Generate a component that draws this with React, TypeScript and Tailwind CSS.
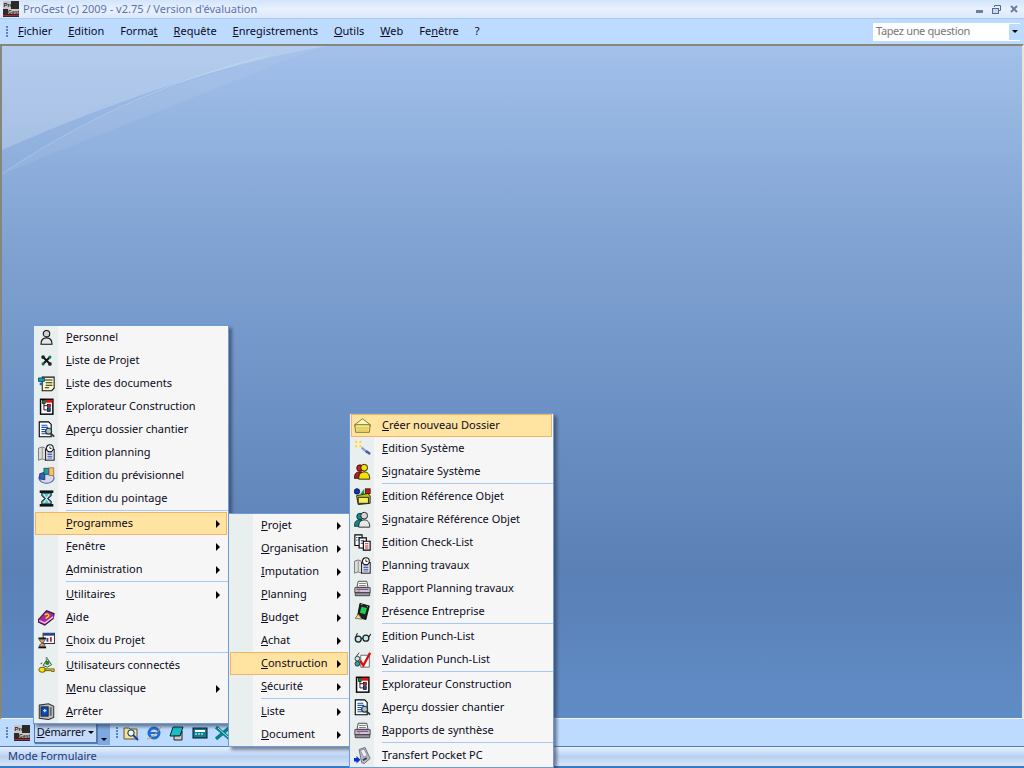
import React from "react";

type IconName = "person" | "tools" | "docs" | "explorer" | "preview" | "planning" | "budget" | "hourglass" | "book" | "choice" | "key" | "stop" | "folder" | "wand" | "users" | "shapes" | "tealuser" | "checklist" | "printer" | "chip" | "glasses" | "check" | "pocket";

function Icon({ name }: { name: IconName }) {
  const s = { width: 17, height: 17, viewBox: "0 0 20 20" };
  switch (name) {
    case "person":
      return <svg {...s}><circle cx="10" cy="5.500" r="3.800" fill="#d2d2d2" stroke="#111" strokeWidth="1.300" /><path d="M3.500 18c0-5.500 2.500-7.500 6.500-7.500s6.500 2 6.500 7.500z" fill="#e6e6e6" stroke="#111" strokeWidth="1.300" /></svg>;
    case "tools":
      return <svg {...s}><path d="M6.500 6.500l7 7M13.500 6.500l-7 7" stroke="#111" strokeWidth="2.300" /><circle cx="6" cy="6" r="2.200" fill="#222" /><circle cx="14" cy="14" r="2.200" fill="#222" /><circle cx="14" cy="6" r="1.800" fill="#0b7a52" /><circle cx="6" cy="14" r="1.800" fill="#0b7a52" /></svg>;
    case "docs":
      return <svg {...s}><path d="M5 2.500h14v13l-3 3H5z" fill="#fff7c2" stroke="#111" strokeWidth="1.200" /><path d="M8 6h9M9 9h8M9 12h8M8 15h5" stroke="#222" strokeWidth="1.200" /><path d="M0.500 3.500h7v4h-7z" fill="#18a0a8" stroke="#0b3d60" /><path d="M2 9h4v3H2z" fill="#1667b5" /></svg>;
    case "explorer":
      return <svg {...s}><rect x="3" y="1.500" width="14.500" height="17.500" fill="#fff" stroke="#000" strokeWidth="1.700" /><rect x="9" y="2" width="8" height="3.500" fill="#e01010" /><path d="M7 5v9h4M7 9h4" stroke="#000" fill="none" /><rect x="5" y="3" width="3.500" height="3.500" fill="#0a8a3a" stroke="#000" strokeWidth=".7" /><rect x="11" y="7.500" width="3.500" height="3.500" fill="#d02020" stroke="#000" strokeWidth=".7" /><rect x="11" y="12.500" width="3.500" height="3.500" fill="#2040d0" stroke="#000" strokeWidth=".7" /></svg>;
    case "preview":
      return <svg {...s}><path d="M1.500 1h11l3 3v14.500h-14z" fill="#fff" stroke="#000" strokeWidth="1.300" /><path d="M4 5h7M4 7.500h8M4 10h5M4 12.500h5M4 15h6" stroke="#1a4fc0" strokeWidth="1.200" /><circle cx="12.500" cy="12" r="3.500" fill="#9fc4cf" stroke="#333" strokeWidth="1.400" /><path d="M15 14.500l4 4" stroke="#333" strokeWidth="2" /></svg>;
    case "planning":
      return <svg {...s}><path d="M0.500 5l4.500-1.500L9 5v14l-4-1.500L.5 19z" fill="#ddd" stroke="#666" /><path d="M5 4v13" stroke="#888" /><rect x="9" y="6.500" width="10" height="12.500" fill="#fff" stroke="#111" strokeWidth="1.200" /><circle cx="14" cy="5" r="4" fill="#fff" stroke="#111" strokeWidth="1.200" /><path d="M14 3v2.200h2" stroke="#111" fill="none" /><path d="M11 10.500h6M11 12.500h6M11 14.500h6M11 16.500h6" stroke="#2c48a0" strokeWidth="1.100" /></svg>;
    case "budget":
      return <svg {...s}><path d="M1 13c0-3 4-5 9-5s9 2 9 5-4 6-9 6-9-3-9-6z" fill="#d5d8ea" stroke="#4a5a9a" strokeWidth="1.200" /><path d="M2 8l6-2v9l-6-1z" fill="#2f62c2" stroke="#1c2f70" /><rect x="7" y="1.500" width="5.500" height="7" fill="#22a09a" stroke="#155" /><rect x="13" y="1" width="5.500" height="9" fill="#f0c860" stroke="#a66" /></svg>;
    case "hourglass":
      return <svg {...s}><rect x="2" y="0.500" width="16" height="3" fill="#111" /><rect x="2" y="16.500" width="16" height="3" fill="#111" /><path d="M4.500 3.500h11v3L11.500 10l4 3.500v3h-11v-3L8.500 10l-4-3.500z" fill="#5fc6c0" stroke="#123" strokeWidth="1.200" /><path d="M6.500 4.500l7 11M13.500 4.500l-7 11" stroke="#fff" /></svg>;
    case "book":
      return <svg {...s}><path d="M0.500 12.500L10 2l9 3.500-1 5.500-10 8-7.500-3.500z" fill="#a8279a" stroke="#3a1040" strokeWidth="1.200" /><path d="M1.500 13.500l6.500 3 10-7.500" stroke="#f3d2ee" strokeWidth="1.500" fill="none" /><path d="M8 7c2-2 5.500-1 4.500 1.200S9.500 9 9.500 11.500" stroke="#f7e000" strokeWidth="1.700" fill="none" /></svg>;
    case "choice":
      return <svg {...s}><rect x="6" y="1.500" width="13.500" height="12" fill="#fff" stroke="#223" strokeWidth="1.100" /><rect x="6" y="1.500" width="13.500" height="2.800" fill="#2a3f9a" /><rect x="14" y="6" width="2.200" height="5.500" fill="#c92020" /><rect x="10" y="7" width="2.200" height="4.500" fill="#1f4fc0" /><rect x="0.500" y="6.500" width="9" height="2.200" fill="#111" /><rect x="0.500" y="17" width="9" height="2.200" fill="#111" /><path d="M2 8.500h6v2L5 13l3 2v2H2v-2l3-2-3-2.500z" fill="#c9a070" stroke="#433" strokeWidth=".8" /></svg>;
    case "key":
      return <svg {...s}><ellipse cx="5" cy="15" rx="4" ry="3" fill="#f2e21b" stroke="#554a00" /><path d="M8 14h11v3h-3v-1H8z" fill="#f2e21b" stroke="#554a00" /><path d="M6 10l5-8 5 7-5 3z" fill="#e7ecd8" stroke="#333" /><circle cx="11" cy="7" r="2.500" fill="#0c8f30" /><path d="M9 1h2M5 7l-2 1" stroke="#222" /></svg>;
    case "stop":
      return <svg {...s}><path d="M1.500 2.500l11-1.500 6 3v13l-6 2.500-11-1.500z" fill="#b9bec0" stroke="#333" strokeWidth="1.200" /><rect x="3.500" y="4.500" width="8.500" height="11" fill="#1444b8" stroke="#222" /><path d="M8 7v4M6 9h4" stroke="#9fe" strokeWidth="1.500" /><path d="M15 5v10" stroke="#666" strokeWidth="2.200" /></svg>;
    case "folder":
      return <svg {...s}><path d="M1 9l9-7 9 7v2H1z" fill="#fbf3c0" stroke="#6b6a20" /><path d="M1 9h18l-1 9H2z" fill="#f7e380" stroke="#6b6a20" /><path d="M3 13h14M4 15.500h12" stroke="#d0b840" /></svg>;
    case "wand":
      return <svg {...s}><path d="M1 1h8v8H1z" fill="#f8e488" /><path d="M5 0v10M0 5h10" stroke="#fff" /><path d="M2 2h1M7 7h1M2 7h1M7 2h1" stroke="#d8b020" /><path d="M9 9l7 6" stroke="#8a98d8" strokeWidth="2.500" /><path d="M14 13l5 3.500" stroke="#4a58b0" strokeWidth="2.800" /></svg>;
    case "users":
      return <svg {...s}><circle cx="7" cy="6" r="3.800" fill="#c62020" stroke="#300" /><path d="M0.500 18c0-6 2.500-7.500 6.500-7.500S11 12 11 18z" fill="#b02020" stroke="#300" /><circle cx="12" cy="5.500" r="4" fill="#f5e000" stroke="#111" /><path d="M5.500 19c0-6 2.500-8.500 6.500-8.500s6.500 2.500 6.500 8.500z" fill="#f5e000" stroke="#111" /></svg>;
    case "shapes":
      return <svg {...s}><circle cx="3.500" cy="4" r="3.200" fill="#1430c0" stroke="#013" /><rect x="13.500" y="1" width="5.500" height="5.500" fill="#c81818" stroke="#311" /><path d="M7.500 7l4.500-6v6z" fill="#149a30" /><path d="M3 9l13-2.500 3 2.500v9l-14 1.500z" fill="#c2c200" stroke="#111" /><path d="M5 11h12v7H5z" fill="#f8ec60" stroke="#111" /></svg>;
    case "tealuser":
      return <svg {...s}><circle cx="7" cy="6.500" r="3.800" fill="#138a86" stroke="#033" /><path d="M0.500 18c0-6 2.500-7.500 6.500-7.500S11 12 11 18z" fill="#138a86" stroke="#033" /><circle cx="12" cy="5.500" r="4" fill="#d5d5d5" stroke="#111" /><path d="M5.500 19c0-6 2.500-8.500 6.500-8.500s6.500 2.500 6.500 8.500z" fill="#e8e8e8" stroke="#111" /></svg>;
    case "checklist":
      return <svg {...s}><path d="M1 1h8.500v12.500H1z" fill="#fff" stroke="#000" strokeWidth="1.300" /><path d="M2.500 4h1.500M5 4h3M2.500 7h1.500M5 7h3" stroke="#1a3fb0" strokeWidth="1.200" /><path d="M6 4.500h8.500v12H6z" fill="#fff" stroke="#000" strokeWidth="1.300" /><path d="M8 8h4M8 11h4" stroke="#1a3fb0" strokeWidth="1.200" /><path d="M11 8.500h8v10.500h-8z" fill="#fff" stroke="#000" strokeWidth="1.300" /><path d="M13 11.500h4M13 14h4M13 16.500h4" stroke="#e01010" strokeWidth="1.200" /></svg>;
    case "printer":
      return <svg {...s}><path d="M5 1.500h10l1.500 7h-13z" fill="#fff" stroke="#333" /><path d="M6 4h8M6 6.500h8" stroke="#666" /><path d="M1 9h18v6H1z" fill="#c9c4d2" stroke="#333" /><path d="M3 11h14" stroke="#7d3f8d" strokeWidth="1.200" /><path d="M1.500 15h17v3.500h-17z" fill="#9a92a8" stroke="#333" /><path d="M4 13h3" stroke="#e05050" /></svg>;
    case "chip":
      return <svg {...s}><path d="M7 0.500l11 3-4 16-10-3z" fill="#1f1f1f" stroke="#000" /><rect x="8" y="5" width="6.500" height="7.500" fill="#1fd050" transform="rotate(15 11 8)" /><path d="M1.500 18l3.500-5 4.500 6z" fill="#f3e070" stroke="#666" /><path d="M8 1.500l2 .5M15 4l1.500.5" stroke="#bbb" /></svg>;
    case "glasses":
      return <svg {...s}><circle cx="5" cy="13" r="3.500" fill="#bfe9ea" stroke="#222" strokeWidth="1.500" /><circle cx="14" cy="12" r="3.500" fill="#bfe9ea" stroke="#222" strokeWidth="1.500" /><path d="M8.500 12.500l2-.5M1.500 12l2.500-6M17 11l3-4" stroke="#222" strokeWidth="1.300" fill="none" /></svg>;
    case "check":
      return <svg {...s}><circle cx="4" cy="9" r="2.800" fill="#bfe9ea" stroke="#222" /><circle cx="4" cy="15" r="2.800" fill="#27a8a8" stroke="#222" /><path d="M3 6l3-4" stroke="#222" /><path d="M8 5h10v14H8z" fill="#fff" stroke="#555" /><path d="M7 11l4 6L19 2" fill="none" stroke="#e01010" strokeWidth="2.800" /></svg>;
    case "pocket":
      return <svg {...s}><path d="M6 3l7-2.500 6 13-7 6-3-1z" fill="#b9bcc8" stroke="#666" /><path d="M7.500 4l4.500-1.500 3.500 7.500-4 2z" fill="#eef" stroke="#889" /><path d="M10 14.500l4.500-2.500 1 2-4.500 2.500z" fill="#444" /><path d="M0 13h3v-2.500l4.500 4.500L3 19.500V17H0z" fill="#0c30d8" /></svg>;
  }
}

type Row = { label: string; u?: number; icon?: IconName; arrow?: boolean; sep?: boolean; active?: boolean };

const menu1: Row[] = [
  { label: "Personnel", icon: "person" },
  { label: "Liste de Projet", icon: "tools" },
  { label: "Liste des documents", icon: "docs" },
  { label: "Explorateur Construction", icon: "explorer" },
  { label: "Aperçu dossier chantier", icon: "preview" },
  { label: "Edition planning", icon: "planning" },
  { label: "Edition du prévisionnel", icon: "budget" },
  { label: "Edition du pointage", icon: "hourglass" },
  { label: "Programmes", arrow: true, sep: true, active: true },
  { label: "Fenêtre", arrow: true },
  { label: "Administration", arrow: true },
  { label: "Utilitaires", arrow: true, sep: true },
  { label: "Aide", icon: "book" },
  { label: "Choix du Projet", icon: "choice" },
  { label: "Utilisateurs connectés", icon: "key", sep: true },
  { label: "Menu classique", arrow: true },
  { label: "Arrêter", icon: "stop" },
];

const menu2: Row[] = [
  { label: "Projet", arrow: true },
  { label: "Organisation", arrow: true },
  { label: "Imputation", arrow: true },
  { label: "Planning", arrow: true },
  { label: "Budget", arrow: true },
  { label: "Achat", arrow: true },
  { label: "Construction", arrow: true, active: true },
  { label: "Sécurité", arrow: true },
  { label: "Liste", arrow: true, sep: true },
  { label: "Document", arrow: true },
];

const menu3: Row[] = [
  { label: "Créer nouveau Dossier", icon: "folder", active: true },
  { label: "Edition Système", icon: "wand" },
  { label: "Signataire Système", icon: "users" },
  { label: "Edition Référence Objet", icon: "shapes", sep: true },
  { label: "Signataire Référence Objet", icon: "tealuser" },
  { label: "Edition Check-List", icon: "checklist" },
  { label: "Planning travaux", icon: "planning" },
  { label: "Rapport Planning travaux", icon: "printer" },
  { label: "Présence Entreprise", icon: "chip" },
  { label: "Edition Punch-List", icon: "glasses", sep: true },
  { label: "Validation Punch-List", icon: "check" },
  { label: "Explorateur Construction", icon: "explorer", sep: true },
  { label: "Aperçu dossier chantier", icon: "preview" },
  { label: "Rapports de synthèse", icon: "printer" },
  { label: "Transfert Pocket PC", icon: "pocket", sep: true },
];

function Mn({ label, u = 0 }: { label: string; u?: number }) {
  return (
    <span className="whitespace-pre">
      {label.slice(0, u)}
      <u>{label[u]}</u>
      {label.slice(u + 1)}
    </span>
  );
}

function Menu({ rows, className }: { rows: Row[]; className: string }) {
  return (
    <div className={"absolute border border-[#6c9bd8] bg-[#f6f6f6] shadow-[3px_3px_3px_rgba(40,50,70,0.55)] " + className}>
      <div className="absolute bottom-0 left-0 top-0 w-[24px] bg-[#e9eeee]" />
      {rows.map((r) => (
        <React.Fragment key={r.label}>
          {r.sep && (
            <div className="relative h-[2px] pl-[32px]">
              <div className="h-[1px] bg-[#a5c8f5]" />
            </div>
          )}
          <div
            className={
              "relative flex h-[23px] items-center " +
              (r.active ? "mx-[1px] border border-[#f3b565] bg-[#ffe3a0]" : "")
            }
          >
            <div className={"flex w-[24px] shrink-0 justify-center " + (r.active ? "-ml-[2px]" : "")}>
              {r.icon && <Icon name={r.icon} />}
            </div>
            <div className="flex-1 pl-[8px]">
              <Mn label={r.label} />
            </div>
            {r.arrow && (
              <div className={"h-0 w-0 border-y-[4px] border-l-[4px] border-y-transparent border-l-black " + (r.active ? "mr-[6px]" : "mr-[8px]")} />
            )}
          </div>
        </React.Fragment>
      ))}
    </div>
  );
}

const menuBar: [string, number][] = [
  ["Fichier", 0],
  ["Edition", 0],
  ["Format", 5],
  ["Requête", 0],
  ["Enregistrements", 0],
  ["Outils", 0],
  ["Web", 0],
  ["Fenêtre", 2],
];

function Grip() {
  return (
    <div className="flex flex-col gap-[1px]">
      {[0, 1, 2, 3].map((i) => (
        <div key={i} className="h-[2px] w-[2px] bg-[#5a82bc]" />
      ))}
    </div>
  );
}

function ProIcon() {
  return (
    <svg width="16" height="16" viewBox="0 0 16 16">
      <rect width="16" height="16" fill="#2b2b2b" />
      <rect x="0" y="0" width="8" height="8" fill="#c8c8c8" />
      <rect x="5" y="8" width="11" height="5" fill="#c8c8c8" />
      <text x="0.500" y="6" fontSize="6" fontWeight="700" fill="#222" fontFamily="Liberation Sans, sans-serif">Pro</text>
      <text x="5" y="12.500" fontSize="5" fontWeight="700" fill="#222" fontFamily="Liberation Sans, sans-serif">Gest</text>
      <rect x="0" y="14" width="16" height="1" fill="#c02020" />
    </svg>
  );
}

export default function App() {
  return (
    <div
      className="relative flex h-[768px] w-[1024px] flex-col overflow-hidden bg-[#bddbff] text-[11px] text-[#0a0a20]"
      style={{ fontFamily: '"Noto Sans", sans-serif' }}
    >
      {/* Title bar */}
      <div className="flex h-[18px] shrink-0 items-center bg-[linear-gradient(#d3e4fb,#e8f1fd_50%,#dce9fb)] pl-[3px]">
        <ProIcon />
        <span className="ml-[4px] text-[#5d72ac]">ProGest (c) 2009 - v2.75 / Version d'évaluation</span>
        <div className="ml-auto mr-[6px] flex items-center gap-[9px]">
          <div className="mt-[4px] h-[3px] w-[7px] bg-[#6a7ea6]" />
          <svg width="9" height="9" viewBox="0 0 9 9"><rect x=".5" y="3.500" width="6" height="5" fill="#c8d8f0" stroke="#56698f" /><path d="M2.500 2V.5h6v5H7" fill="none" stroke="#56698f" /></svg>
          <svg width="8" height="8" viewBox="0 0 8 8"><path d="M1 1l6 6M7 1L1 7" stroke="#6a7ea6" strokeWidth="2" /></svg>
        </div>
      </div>
      {/* Menu bar */}
      <div className="flex h-[26px] shrink-0 items-center border-t border-[#a8caf4] bg-[#bddbff] pl-[6px] text-[#0a0a20]">
        <Grip />
        <div className="ml-[10px] flex gap-[16px]">
          {menuBar.map(([l, u]) => (
            <Mn key={l} label={l} u={u} />
          ))}
          <span>?</span>
        </div>
        <div className="ml-auto mr-[4px] flex h-[18px] w-[147px] items-center justify-between bg-white pl-[3px] text-[#777]">
          <span className="tracking-[-0.35px]">Tapez une question</span>
          <div className="flex h-[16px] w-[11px] items-center justify-center bg-[#bddbff]">
            <div className="h-0 w-0 border-x-[3px] border-t-[3px] border-x-transparent border-t-black" />
          </div>
        </div>
      </div>
      {/* Desktop */}
      <div className="relative min-h-0 flex-1 border-b border-l-2 border-r-2 border-t-2 border-[#86867a] border-b-[#eef5ff] border-r-[#e9e6d4] bg-[linear-gradient(#a2c0ea,#7fa2d2_30%,#5a80b6_78%,#608cc6)]">
        <svg className="absolute left-0 top-0" width="330" height="130" viewBox="0 0 330 130">
          <path d="M0 104C100 60 210 20 325 0H0z" fill="#ffffff" fillOpacity=".2" />
          <path d="M0 128C70 80 160 36 265 10" fill="none" stroke="#fff" strokeOpacity=".22" />
          <path d="M0 128C70 80 170 30 320 0" fill="#fff" fillOpacity=".06" />
        </svg>
      </div>
      {/* Toolbar */}
      <div className="flex h-[27px] shrink-0 items-center bg-[#bddbff] pl-[6px]">
        <Grip />
        <div className="ml-[6px]"><ProIcon /></div>
        <div className="ml-[4px] flex h-[20px] w-[63px] items-center justify-center border border-[#4f7ab0] border-t-0 bg-[#c4dbf8] text-[#0a0a20] shadow-[1px_1px_1px_#5a7aa8]">
          <span className="tracking-[-0.2px]"><Mn label="Démarrer" /></span>
          <div className="ml-[3px] h-0 w-0 border-x-[3px] border-t-[3px] border-x-transparent border-t-black" />
        </div>
        <div className="ml-[1px] flex h-[24px] w-[12px] items-end justify-center bg-[#7ea8e0] pb-[4px]">
          <div className="h-0 w-0 border-x-[3px] border-t-[3px] border-x-transparent border-t-black" />
        </div>
        <div className="ml-[6px]"><Grip /></div>
        <div className="ml-[5px] flex gap-[7px]">
          <svg width="16" height="16" viewBox="0 0 16 16"><path d="M1 3h5l1 1h7v10H1z" fill="#f7e38a" stroke="#555" /><circle cx="8" cy="8" r="3.200" fill="#dff" stroke="#124" /><path d="M10 10l5 5" stroke="#1a3ab0" strokeWidth="2" /></svg>
          <svg width="16" height="16" viewBox="0 0 16 16"><circle cx="8" cy="8" r="5" fill="none" stroke="#1d6cd8" strokeWidth="3" /><path d="M4 8h8" stroke="#1d6cd8" strokeWidth="2" /><path d="M1 14C6 13 12 7 15 2" stroke="#e0a020" fill="none" /></svg>
          <svg width="16" height="16" viewBox="0 0 16 16"><path d="M4 2h10l-3 9H1z" fill="#16c0c8" stroke="#123" /><path d="M5 11h6l2-5v9H5z" fill="#ccc" stroke="#222" /></svg>
          <svg width="16" height="16" viewBox="0 0 16 16"><rect x="1" y="3" width="14" height="10" fill="#128088" stroke="#013" /><rect x="3" y="5" width="10" height="2" fill="#fff" /><path d="M3 9h2M6 9h2M9 9h2" stroke="#fff" /></svg>
          <svg width="16" height="16" viewBox="0 0 16 16"><path d="M1 2l14 12M15 2L1 14" stroke="#0a7e88" strokeWidth="3.500" /><path d="M3 3l10 9" stroke="#a8f0f0" /></svg>
        </div>
      </div>
      {/* Status bar */}
      <div className="flex h-[22px] shrink-0 items-center border-b-2 border-t border-b-[#3a78c8] border-t-[#4f7fc0] bg-[linear-gradient(#e8f1fd,#c5daf5_35%,#b8d0f0_50%,#d8e6f8)] pl-[8px] text-[#1c3a7a]">
        Mode Formulaire
      </div>

      <Menu rows={menu1} className="left-[33px] top-[325px] w-[196px]" />
      <Menu rows={menu2} className="left-[228px] top-[513px] w-[122px]" />
      <Menu rows={menu3} className="left-[349px] top-[413px] w-[205px]" />
    </div>
  );
}
